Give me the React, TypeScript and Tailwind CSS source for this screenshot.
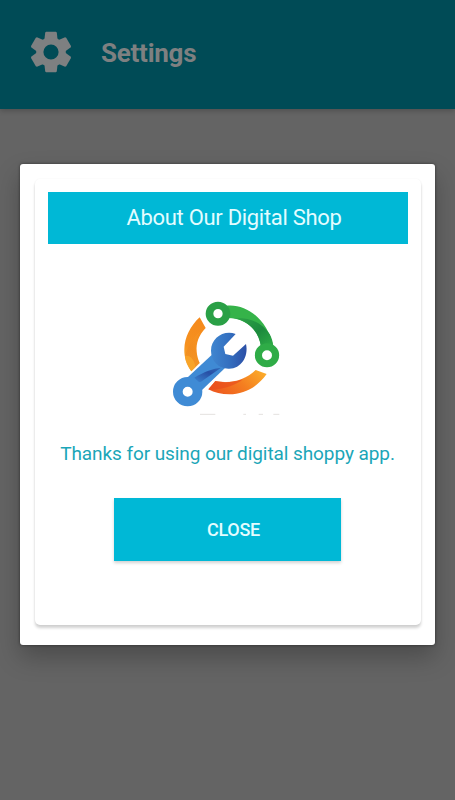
import { useState } from "react";

const teeth = [0, 60, 120, 180, 240, 300];

function GearIcon() {
  return (
    <svg viewBox="0 0 24 24" className="h-12 w-12 overflow-visible" fill="currentColor">
      <circle cx="12" cy="12" r="5.6" fill="none" stroke="currentColor" strokeWidth="3.6" />
      {teeth.map((angle) => (
        <path
          key={angle}
          d="M9.600 1.850H14.400L14.900 2.200L15.300 6L8.700 6L9.100 2.200Z"
          transform={`rotate(${angle} 12 12)`}
        />
      ))}
    </svg>
  );
}

function ShopLogo() {
  return (
    <svg viewBox="0 0 375 390" className="h-[130px] w-[125px]" aria-label="Digital Shop">
      <defs>
        <linearGradient id="orangeLeft" x1="0.6" y1="0" x2="0.3" y2="1">
          <stop offset="0" stopColor="#f58a1c" />
          <stop offset="0.6" stopColor="#f6911f" />
          <stop offset="1" stopColor="#fbb02c" />
        </linearGradient>
        <linearGradient id="orangeFold" x1="0.8" y1="0" x2="0.2" y2="1">
          <stop offset="0" stopColor="#f99d26" />
          <stop offset="1" stopColor="#e2711b" />
        </linearGradient>
        <linearGradient id="orangeBottom" x1="0" y1="0.6" x2="1" y2="0.2">
          <stop offset="0" stopColor="#ee5a1f" />
          <stop offset="0.5" stopColor="#f47d20" />
          <stop offset="1" stopColor="#fbac2b" />
        </linearGradient>
        <linearGradient id="greenFold" x1="0" y1="0" x2="1" y2="1">
          <stop offset="0" stopColor="#2fa447" />
          <stop offset="0.55" stopColor="#1c8a3d" />
          <stop offset="1" stopColor="#2fae47" />
        </linearGradient>
        <linearGradient id="blueHead" x1="0" y1="0.5" x2="1" y2="0.5">
          <stop offset="0" stopColor="#3f86d0" />
          <stop offset="0.5" stopColor="#3470c0" />
          <stop offset="1" stopColor="#2c4fa6" />
        </linearGradient>
        <linearGradient id="blueFold" x1="0" y1="1" x2="1" y2="0">
          <stop offset="0" stopColor="#3b83cf" />
          <stop offset="0.6" stopColor="#274fa5" />
          <stop offset="1" stopColor="#3069b9" />
        </linearGradient>
      </defs>

      {/* Orange ring */}
      <path d="M104 82L122 114C101 136 93 159 95 184C96 197 99 209 104 219L79 244C65 224 57 202 58 178C59 141 76 108 104 82Z" fill="url(#orangeLeft)" />
      <path d="M60 198C67 172 82 145 106 124C92 143 87 171 96 199C98 208 101 214 104 219L79 244C68 228 61 214 60 198Z" fill="url(#orangeFold)" opacity="0.4" />
      <path d="M60 198C68 196 76 199 82 207C88 215 91 224 91 232L79 244C68 228 61 214 60 198Z" fill="#fbab2b" opacity="0.7" />
      <path d="M151 273C193 283 241 271 272 240L305 252C276 293 235 313 193 313C170 313 148 308 130 298Z" fill="url(#orangeBottom)" />
      <path d="M151 273C190 280 213 275 234 268C211 286 180 298 135 300L130 298Z" fill="#e84c1d" opacity="0.65" />

      {/* Green arm */}
      <path d="M184 47C247 40 308 91 325 169L288 170C283 123 246 84 186 84Z" fill="#35b349" />
      <path d="M206 84C253 81 289 97 314 132C320 144 324 156 325 169L288 170C281 124 249 92 206 84Z" fill="url(#greenFold)" />
      <path
        fillRule="evenodd"
        d="M159 35A37 36 0 1 0 159 107A37 36 0 1 0 159 35ZM159 57A14 14 0 1 1 159 85A14 14 0 1 1 159 57Z"
        fill="#2aa046"
      />
      <path
        fillRule="evenodd"
        d="M306 160A36.500 36 0 1 0 306 232A36.500 36 0 1 0 306 160ZM306 181A15 15 0 1 1 306 211A15 15 0 1 1 306 181Z"
        fill="#2fac47"
      />

      {/* Blue wrench */}
      <path d="M140 195L180 234L104 307L60 269Z" fill="#3f8ad4" />
      <path d="M212 132C176 119 138 144 138 182C138 213 161 235 190 236C226 238 252 202 243 162L204 197L181 192L176 170Z" fill="url(#blueHead)" />
      <path d="M168 233C144 236 119 244 88 263L101 276L107 276Z" fill="url(#blueFold)" />
      <path
        fillRule="evenodd"
        d="M68 261A44 44 0 1 0 68 349A44 44 0 1 0 68 261ZM68 290A15 15 0 1 1 68 320A15 15 0 1 1 68 290Z"
        fill="#3f8bd5"
      />

      {/* Trace of the wordmark under the emblem */}
      <path d="M105 373H151M235 373H243M281 373H294M325 373H343" stroke="#e4e1df" strokeWidth="3" />
    </svg>
  );
}

export default function App() {
  const [open, setOpen] = useState(true);

  return (
    <div className="flex h-[800px] w-full flex-col overflow-hidden bg-[#646464] font-[Roboto,sans-serif]">
      {/* App bar */}
      <header className="flex h-[109px] shrink-0 items-start bg-[#004b56] pl-[26.500px] pt-7 text-[#7e8081] shadow-[0_2px_5px_rgba(0,0,0,0.2)]">
        <GearIcon />
        <h1 className="ml-[26.500px] mt-[7px] text-[26px] font-bold leading-9 tracking-[-0.25px]">
          Settings
        </h1>
      </header>

      {/* About dialog */}
      {open && (
        <div className="mx-5 mt-[55px] flex h-[481px] flex-col rounded-[3px] bg-white px-[15px] pt-[15px] shadow-[0_12px_24px_rgba(0,0,0,0.25),0_0_3px_rgba(0,0,0,0.5)]">
          <div className="flex h-[446px] w-[386px] flex-col items-center rounded-[5px] bg-white px-[13px] pt-[13px] shadow-[0_3px_3px_rgba(0,0,0,0.18),0_0_2px_rgba(0,0,0,0.06)]">
            <h2 className="flex h-[52px] w-full items-center justify-center bg-[#00b8d6] pb-px pl-3 text-[22px] tracking-[-0.3px] text-[#e3fcff]">
              About Our Digital Shop
            </h2>

            <div className="mr-[2px] mt-[46px]">
              <ShopLogo />
            </div>

            <p className="mr-px mt-5 whitespace-nowrap text-[19px] leading-7 tracking-[-0.080px] text-[#1ba6b8]">
              Thanks for using our digital shoppy app.
            </p>

            <button
              onClick={() => setOpen(false)}
              className="mr-[2px] mt-[30px] h-[63px] w-[227px] bg-[#00b8d6] pl-[13px] text-[18px] font-medium tracking-[-0.3px] text-[#e3fcff] shadow-[0_2px_3px_rgba(0,0,0,0.18)]"
            >
              CLOSE
            </button>
          </div>
        </div>
      )}
    </div>
  );
}
